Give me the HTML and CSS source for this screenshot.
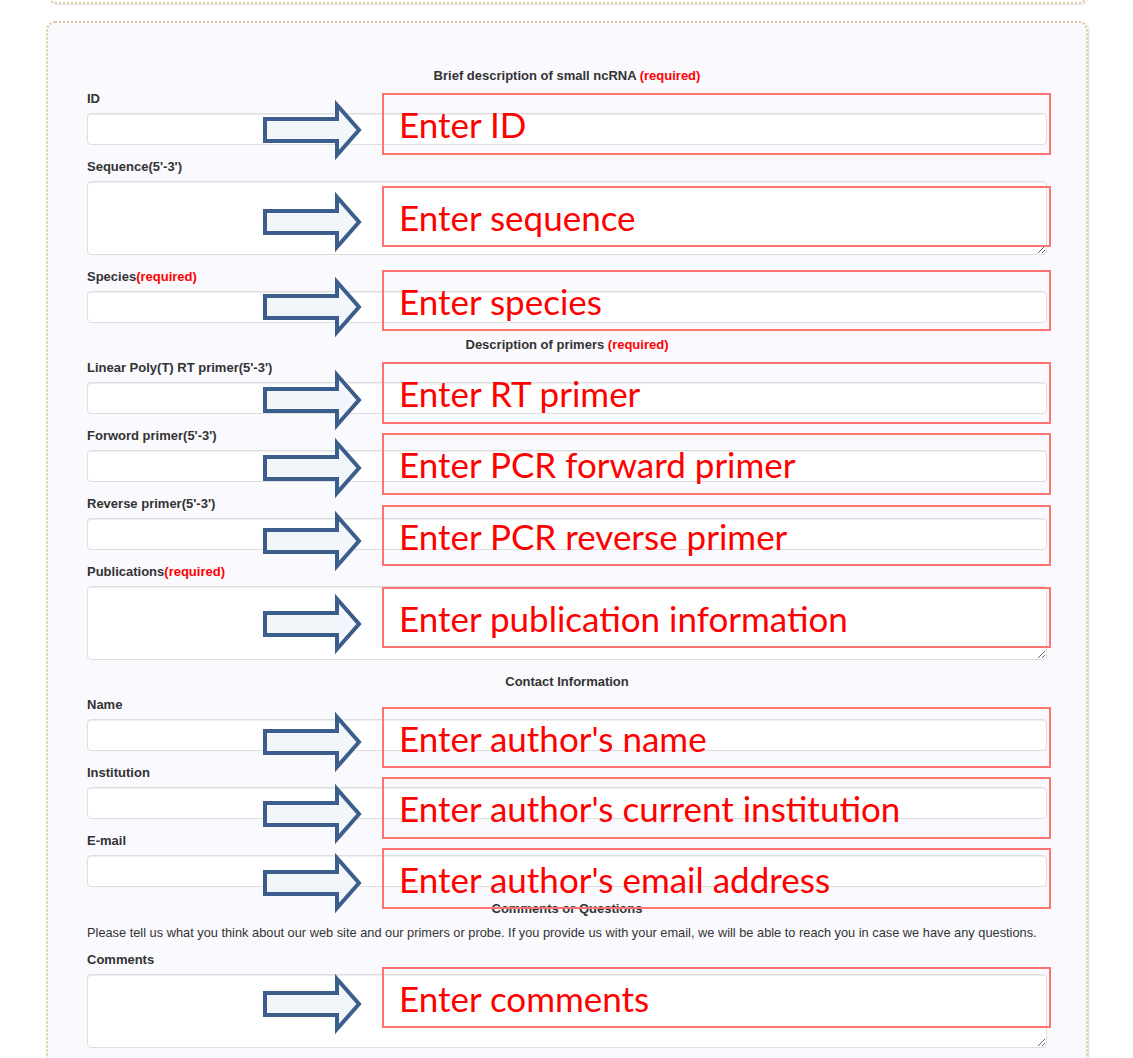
FILE: index.html
```html
<!DOCTYPE html>
<html lang="en">
<head>
<meta charset="utf-8">
<title>Submit small ncRNA</title>
<link rel="stylesheet" href="styles.css">
</head>
<body>
<div class="page">
  <div class="prev-panel"></div>
  <div class="panel">
    <form class="form">
      <div class="section-title">Brief description of small ncRNA <span class="req">(required)</span></div>
      <div class="field">
        <label class="field-label">ID</label>
        <input class="control" type="text">
      </div>
      <div class="field">
        <label class="field-label">Sequence(5'-3')</label>
        <textarea class="control area"></textarea>
      </div>
      <div class="field">
        <label class="field-label">Species<span class="req">(required)</span></label>
        <input class="control" type="text">
      </div>
      <div class="section-title">Description of primers <span class="req">(required)</span></div>
      <div class="field">
        <label class="field-label">Linear Poly(T) RT primer(5'-3')</label>
        <input class="control" type="text">
      </div>
      <div class="field">
        <label class="field-label">Forword primer(5'-3')</label>
        <input class="control" type="text">
      </div>
      <div class="field">
        <label class="field-label">Reverse primer(5'-3')</label>
        <input class="control" type="text">
      </div>
      <div class="field">
        <label class="field-label">Publications<span class="req">(required)</span></label>
        <textarea class="control area"></textarea>
      </div>
      <div class="section-title">Contact Information</div>
      <div class="field">
        <label class="field-label">Name</label>
        <input class="control" type="text">
      </div>
      <div class="field">
        <label class="field-label">Institution</label>
        <input class="control" type="text">
      </div>
      <div class="field">
        <label class="field-label">E-mail</label>
        <input class="control" type="text">
      </div>
      <div class="section-title">Comments or Questions</div>
      <p class="note-text">Please tell us what you think about our web site and our primers or probe. If you provide us with your email, we will be able to reach you in case we have any questions.</p>
      <div class="field">
        <label class="field-label">Comments</label>
        <textarea class="control area"></textarea>
      </div>
    </form>
  </div>

  <div class="callout c1">Enter ID</div>
  <div class="callout c2">Enter sequence</div>
  <div class="callout c3">Enter species</div>
  <div class="callout c4">Enter RT primer</div>
  <div class="callout c5">Enter PCR forward primer</div>
  <div class="callout c6">Enter PCR reverse primer</div>
  <div class="callout c7">Enter publication information</div>
  <div class="callout c8">Enter author's name</div>
  <div class="callout c9">Enter author's current institution</div>
  <div class="callout c10">Enter author's email address</div>
  <div class="callout c11">Enter comments</div>

  <svg class="arrow a1" viewBox="0 0 104 60"><path d="M5 19 H77 V5 L99 30 L77 55 V41 H5 Z"/></svg>
  <svg class="arrow a2" viewBox="0 0 104 60"><path d="M5 19 H77 V5 L99 30 L77 55 V41 H5 Z"/></svg>
  <svg class="arrow a3" viewBox="0 0 104 60"><path d="M5 19 H77 V5 L99 30 L77 55 V41 H5 Z"/></svg>
  <svg class="arrow a4" viewBox="0 0 104 60"><path d="M5 19 H77 V5 L99 30 L77 55 V41 H5 Z"/></svg>
  <svg class="arrow a5" viewBox="0 0 104 60"><path d="M5 19 H77 V5 L99 30 L77 55 V41 H5 Z"/></svg>
  <svg class="arrow a6" viewBox="0 0 104 60"><path d="M5 19 H77 V5 L99 30 L77 55 V41 H5 Z"/></svg>
  <svg class="arrow a7" viewBox="0 0 104 60"><path d="M5 19 H77 V5 L99 30 L77 55 V41 H5 Z"/></svg>
  <svg class="arrow a8" viewBox="0 0 104 60"><path d="M5 19 H77 V5 L99 30 L77 55 V41 H5 Z"/></svg>
  <svg class="arrow a9" viewBox="0 0 104 60"><path d="M5 19 H77 V5 L99 30 L77 55 V41 H5 Z"/></svg>
  <svg class="arrow a10" viewBox="0 0 104 60"><path d="M5 19 H77 V5 L99 30 L77 55 V41 H5 Z"/></svg>
  <svg class="arrow a11" viewBox="0 0 104 60"><path d="M5 19 H77 V5 L99 30 L77 55 V41 H5 Z"/></svg>
</div>
</body>
</html>
```

FILE: styles.css
```css
html, body {
  margin: 0;
  padding: 0;
  background: #ffffff;
}

body {
  font-family: "Liberation Sans", Arial, sans-serif;
  font-size: 13px;
  color: #333333;
  overflow: hidden;
}

.page {
  position: relative;
  width: 1133px;
  height: 1058px;
  overflow: hidden;
}

.prev-panel {
  height: 40px;
  margin: -38px 46px 0 48px;
  border: 2px dotted #dcc69e;
  border-top: none;
  border-radius: 0 0 8px 8px;
  box-shadow: 1px 1px 2px rgba(0, 0, 0, 0.12);
}

.panel {
  margin: 17px 45px 0 46px;
  border: 2px dotted #dcc69e;
  border-radius: 9px;
  background: #f9f9fe;
  box-shadow: 1px 1px 2px rgba(0, 0, 0, 0.15);
  padding: 44px 39px 40px 39px;
}

.form {
  display: flex;
  flex-direction: column;
}

.section-title {
  text-align: center;
  font-weight: bold;
  line-height: 18px;
  margin-bottom: 5px;
  color: #333333;
}

.req {
  color: #ff0000;
}

.field {
  display: flex;
  flex-direction: column;
  margin-bottom: 13px;
}

.field-label {
  font-weight: bold;
  line-height: 18px;
  margin-bottom: 5px;
}

.control {
  display: block;
  box-sizing: border-box;
  width: 100%;
  height: 32px;
  margin: 0;
  padding: 6px 12px;
  font: inherit;
  background: #ffffff;
  border: 1px solid #dedede;
  border-radius: 4px;
  box-shadow: inset 0 1px 1px rgba(0, 0, 0, 0.075);
}

.area {
  height: 74px;
  resize: vertical;
}

.note-text {
  margin: 1px 0 9px 0;
  line-height: 18px;
  font-size: 12.8px;
  white-space: nowrap;
}

/* annotation call-outs laid over the form */
.callout {
  position: absolute;
  left: 382px;
  width: 669px;
  height: 61px;
  box-sizing: border-box;
  border: 2px solid #ff7272;
  display: flex;
  align-items: center;
  padding-left: 15px;
  font-family: Lato, "Open Sans", sans-serif;
  font-size: 35px;
  color: #ff0000;
  white-space: nowrap;
}

.c1 { top: 93px; height: 62px; }
.c2 { top: 186px; }
.c3 { top: 270px; }
.c4 { top: 362px; height: 62px; }
.c5 { top: 433px; height: 62px; }
.c6 { top: 505px; }
.c7 { top: 587px; }
.c8 { top: 707px; }
.c9 { top: 777px; height: 62px; }
.c10 { top: 848px; }
.c11 { top: 967px; }

.arrow {
  position: absolute;
  left: 260px;
  width: 104px;
  height: 60px;
  overflow: visible;
}

.arrow path {
  fill: #f2f5f9;
  stroke: #3b5e8c;
  stroke-width: 4;
  stroke-linejoin: miter;
}

.a1 { top: 100px; }
.a2 { top: 192px; }
.a3 { top: 277px; }
.a4 { top: 370px; }
.a5 { top: 438px; }
.a6 { top: 511px; }
.a7 { top: 594px; }
.a8 { top: 712px; }
.a9 { top: 784px; }
.a10 { top: 853px; }
.a11 { top: 974px; }
```
